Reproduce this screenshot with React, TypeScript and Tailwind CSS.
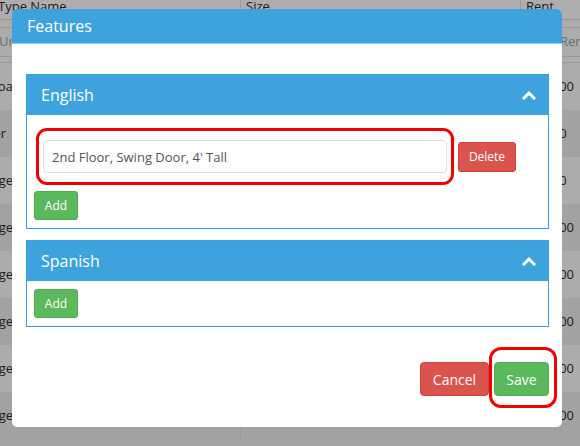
const Chevron = () => (
  <svg width="14" height="10" viewBox="0 0 14 10" fill="none">
    <polyline points="2,8 7,3 12,8" stroke="white" strokeWidth="3" strokeLinecap="square" />
  </svg>
);

const Panel = ({ title, children }: { title: string; children: React.ReactNode }) => (
  <div className="border border-[#3d9fd9] bg-white">
    <div className="h-[40px] bg-[#3ea3dd] pl-[14px] pr-[12px] flex items-center justify-between text-white text-[16px]">
      <span>{title}</span>
      <Chevron />
    </div>
    <div className="pl-[7px] pr-[8px] pt-[8px] pb-[8px]">{children}</div>
  </div>
);

const AddButton = () => (
  <button className="w-[44px] h-[29px] rounded-[3px] bg-[#5cb85c] border border-[#4cae4c] text-white text-[12px]">
    Add
  </button>
);

const App = () => {
  const rows = [
    { name: "Board", edge: "w-[26px]", rent: "$100.00", dark: false },
    { name: "Locker", edge: "w-[6px]", rent: "$75.00", dark: true },
    { name: "Garage", edge: "w-[13px]", rent: "$75.00", dark: false },
    { name: "Garage", edge: "w-[13px]", rent: "$200.00", dark: true },
    { name: "Garage", edge: "w-[13px]", rent: "$200.00", dark: false },
    { name: "Garage", edge: "w-[13px]", rent: "$150.00", dark: true },
    { name: "Garage", edge: "w-[13px]", rent: "$200.00", dark: false },
    { name: "Garage", edge: "w-[13px]", rent: "$250.00", dark: true },
  ];

  return (
    <div className="relative w-[580px] h-[446px] overflow-hidden bg-[#a4a4a4] font-['Open_Sans',sans-serif]">
      {/* page behind the dimmed overlay */}
      <div className="text-[13px] text-[#1c1c1c]">
        <div className="grid grid-cols-[240px_280px_60px] h-[20px] bg-[#adadad] border-b border-[#959595]">
          <div className="-mt-[3px] -ml-[2px]">Type Name</div>
          <div className="-mt-[3px] pl-[5px] border-l border-[#9a9a9a]">Size</div>
          <div className="-mt-[3px] pl-[5px] border-l border-[#9a9a9a]">Rent</div>
        </div>
        <div className="grid grid-cols-[240px_280px_60px] h-[43px] bg-[#acacac] pt-[7px] border-b border-[#9c9c9c]">
          <div className="h-[30px] border-y border-[#999] flex items-center -ml-[1px] text-[#6e6e6e]">Unit</div>
          <div className="h-[30px] border-y border-[#999]"></div>
          <div className="h-[30px] border-y border-[#999] flex items-center pl-[40px] text-[#6e6e6e]">Rent</div>
        </div>
        {rows.map((row, index) => (
          <div
            key={index}
            className={`grid grid-cols-[240px_280px_60px] h-[47px] items-center ${row.dark ? "bg-[#a2a2a2]" : "bg-[#acacac]"}`}
          >
            <div className={`${row.edge} flex justify-end whitespace-nowrap`}>{row.name}</div>
            <div className="border-l border-[#9a9a9a] h-full"></div>
            <div className="whitespace-nowrap pl-[6px]">{row.rent}</div>
          </div>
        ))}
      </div>

      {/* modal */}
      <div className="absolute left-[12px] top-[9px] w-[550px] h-[418px] bg-white rounded-[5px] overflow-hidden">
        <div className="h-[35px] bg-[#3ea3dd] border-b border-[#93cdef] px-[15px] flex items-center text-white text-[16px]">
          Features
        </div>
        <div className="pl-[14px] pr-[13px] pt-[30px]">
          <Panel title="English">
            <div className="pt-[5px]">
              <div className="flex items-center">
                <div className="ml-[2px] border-[3px] border-[#f00000] rounded-[11px] px-[4px] py-[9px]">
                  <input
                    readOnly
                    value="2nd Floor, Swing Door, 4' Tall"
                    className="w-[404px] h-[33px] border border-[#d3e2e5] rounded-[4px] px-[8px] text-[13px] text-[#555] outline-none"
                  />
                </div>
                <button className="ml-[4px] w-[58px] h-[30px] rounded-[3px] bg-[#d9534f] border border-[#d43f3a] text-white text-[12px]">
                  Delete
                </button>
              </div>
              <div className="mt-[6px]">
                <AddButton />
              </div>
            </div>
          </Panel>
          <div className="mt-[11px]">
            <Panel title="Spanish">
              <AddButton />
            </Panel>
          </div>
          <div className="mt-[35px] flex justify-end gap-[5px]">
            <button className="w-[69px] h-[34px] rounded-[4px] bg-[#d9534f] border border-[#d43f3a] text-white text-[14px]">
              Cancel
            </button>
            <div className="relative">
              <button className="w-[55px] h-[34px] rounded-[4px] bg-[#5cb85c] border border-[#4cae4c] text-white text-[14px]">
                Save
              </button>
              <div className="absolute -left-[5px] -top-[15px] -right-[8px] -bottom-[12px] border-[3px] border-[#f00000] rounded-[12px]"></div>
            </div>
          </div>
        </div>
      </div>
    </div>
  );
};

export default App;
